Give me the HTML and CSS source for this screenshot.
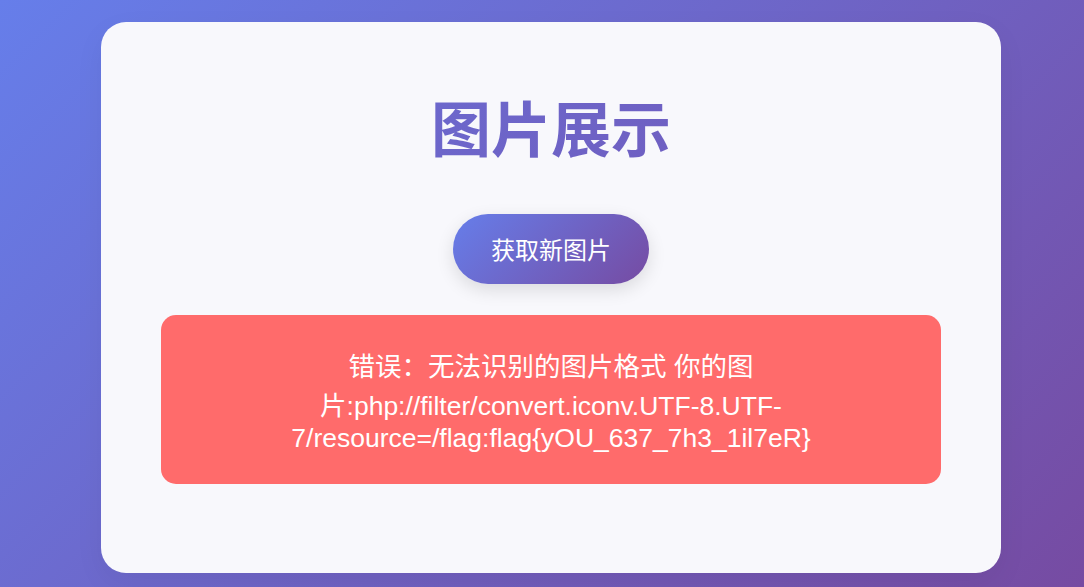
FILE: index.html
```html
<!DOCTYPE html>
<html lang="zh-CN">
<head>
<meta charset="utf-8">
<title>图片展示</title>
<link rel="stylesheet" href="styles.css">
</head>
<body>
<div class="card">
  <h1 class="title">图片展示</h1>
  <div class="actions">
    <button class="btn" type="button">获取新图片</button>
  </div>
  <div class="error">错误：无法识别的图片格式 你的图片:php://filter/convert.iconv.UTF-8.UTF-7/resource=/flag:flag{yOU_637_7h3_1il7eR}</div>
</div>
</body>
</html>
```

FILE: styles.css
```css
html, body {
  margin: 0;
  padding: 0;
}
body {
  min-height: 100vh;
  background: linear-gradient(135deg, #667eea 0%, #764ba2 100%);
  font-family: "Liberation Sans", "Noto Sans CJK SC", sans-serif;
  padding: 22px 0 14px 18px;
  box-sizing: border-box;
}
.card {
  width: 900px;
  margin: 0 auto;
  box-sizing: border-box;
  background: #f8f8fc;
  border-radius: 25px;
  padding: 68px 60px 89px;
  box-shadow: 0 10px 30px rgba(0, 0, 0, 0.05);
}
.title {
  margin: 0 0 52px;
  text-align: center;
  font-size: 60px;
  line-height: 72px;
  font-weight: bold;
  font-family: "Noto Sans CJK SC", sans-serif;
  background: linear-gradient(135deg, #6a6fd6 0%, #7158b8 100%);
  -webkit-background-clip: text;
  background-clip: text;
  color: transparent;
}
.actions {
  display: flex;
  justify-content: center;
  margin-bottom: 31px;
}
.btn {
  border: none;
  border-radius: 35px;
  padding: 20px 38px;
  font-size: 24px;
  line-height: 30px;
  font-family: "Noto Sans CJK SC", sans-serif;
  color: #fff;
  background: linear-gradient(135deg, #667eea 0%, #764ba2 100%);
  box-shadow: 0 6px 18px rgba(0, 0, 0, 0.12);
  cursor: pointer;
}
.error {
  background: #ff6b6b;
  color: #fff;
  border-radius: 15px;
  padding: 30px 40px;
  text-align: center;
  font-size: 26.5px;
}
```
